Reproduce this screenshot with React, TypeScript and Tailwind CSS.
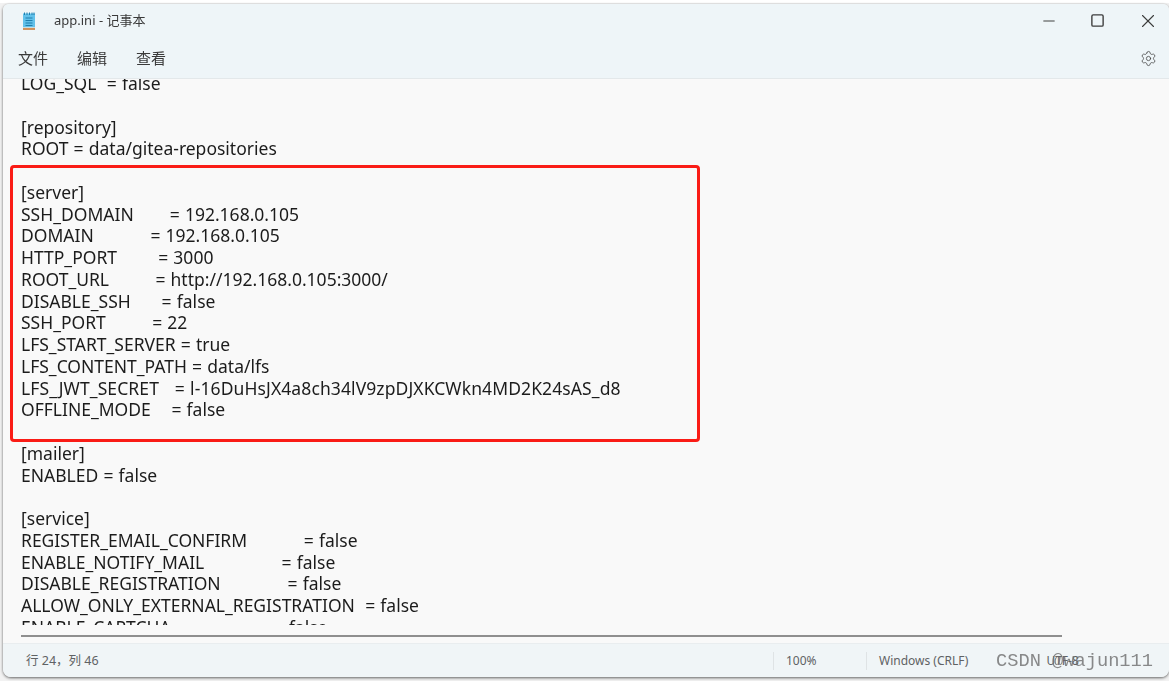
import React from "react";
import { Settings, X, Minus, Square } from "lucide-react";

const lines = [
  "LOG_SQL  = false",
  "",
  "[repository]",
  "ROOT = data/gitea-repositories",
  "",
  "[server]",
  "SSH_DOMAIN       = 192.168.0.105",
  "DOMAIN           = 192.168.0.105",
  "HTTP_PORT        = 3000",
  "ROOT_URL         = http://192.168.0.105:3000/",
  "DISABLE_SSH      = false",
  "SSH_PORT         = 22",
  "LFS_START_SERVER = true",
  "LFS_CONTENT_PATH = data/lfs",
  "LFS_JWT_SECRET   = l-16DuHsJX4a8ch34lV9zpDJXKCWkn4MD2K24sAS_d8",
  "OFFLINE_MODE    = false",
  "",
  "[mailer]",
  "ENABLED = false",
  "",
  "[service]",
  "REGISTER_EMAIL_CONFIRM           = false",
  "ENABLE_NOTIFY_MAIL               = false",
  "DISABLE_REGISTRATION             = false",
  "ALLOW_ONLY_EXTERNAL_REGISTRATION  = false",
  "ENABLE_CAPTCHA                    = false",
];

const NotepadIcon = () => (
  <svg width="14" height="18" viewBox="0 0 14 18">
    <rect x="1" y="1.5" width="12" height="14" fill="#62c1ea" />
    <rect x="1" y="15.5" width="12" height="0.8" fill="#e8e2d4" />
    <rect x="1" y="16.3" width="12" height="1.4" fill="#c46a1e" />
    <path d="M2.5 0.5v2.5M5 0.5v2.5M7.5 0.5v2.5M10 0.5v2.5M12 0.5v2.5" stroke="#1f7fae" strokeWidth="1" />
    <path d="M3.5 6h7M3.5 8.5h7M3.5 11h7M3.5 13.5h7" stroke="#1f7fae" strokeWidth="1" />
  </svg>
);

export default function App() {
  return (
    <div className="relative h-[681px] w-[1169px] overflow-hidden bg-[#f2f2f2] font-['Noto_Sans','Noto_Sans_CJK_SC',sans-serif]">
      <div className="h-[3px] bg-white" />
      <div className="ml-[3px] mt-px flex h-[673px] flex-col overflow-hidden rounded-t-md rounded-b-lg bg-[#f9f9f9] shadow-[0_1px_3px_rgba(0,0,0,0.6)] blur-[0.3px]">
        {/* Title bar */}
        <div className="h-[75px] shrink-0 border-b border-[#e3e8ea] bg-[#eef5f8]">
          <div className="flex h-[33px] items-center">
            <div className="ml-[19px] flex w-[14px]">
              <NotepadIcon />
            </div>
            <span className="ml-[18px] text-[13px] text-[#3a3a3a]">app.ini - 记事本</span>
            <div className="ml-auto flex items-center gap-[32px] pr-[10px] text-[#3c3c3c]">
              <Minus size={18} strokeWidth={1.3} />
              <Square size={15} strokeWidth={2.2} />
              <X size={22} strokeWidth={1.2} />
            </div>
          </div>
          <div className="flex h-[42px] items-center pl-[15px] pr-[12px] text-[15px] text-[#3a3a3a]">
            <span>文件</span>
            <span className="ml-[29px]">编辑</span>
            <span className="ml-[29px]">查看</span>
            <Settings size={17} strokeWidth={1.1} className="ml-auto text-[#444]" />
          </div>
        </div>

        {/* Editor */}
        <div className="flex h-[564px] shrink-0 flex-col">
          <div className="h-[546px] overflow-hidden">
            <div className="-mt-[6px] pl-[18px] text-[17.5px] leading-[21.75px] text-[#1c1c1c] [word-spacing:0.6px]">
              {lines.map((line, i) => (
                <div
                  key={i}
                  className={line.startsWith("LFS_JWT") ? "h-[21.75px] whitespace-pre tracking-[0.1px]" : "h-[21.75px] whitespace-pre"}
                >
                  {line}
                </div>
              ))}
            </div>
          </div>
          <div className="ml-[18px] mt-[10px] h-[2px] w-[1041px] bg-[#8f8f8f]" />
        </div>
        <div className="h-[34px] shrink-0 border-t border-[#e9edef] bg-[#f0f5f7] text-[12px] text-[#5f6264]">
          <div className="flex h-full items-center">
            <span className="ml-[23px] mt-px text-[12.5px]">行 24，列 46</span>
            <div className="ml-auto flex h-[18px] items-center">
              <div className="h-full w-px bg-[#dfe3e5]" />
              <span className="w-[92px] pl-[12px]">100%</span>
              <div className="h-full w-px bg-[#dfe3e5]" />
              <span className="w-[302px] pl-[12px]">
                Windows (CRLF)
                <span className="ml-[78px]">UTF-8</span>
              </span>
            </div>
          </div>
        </div>
      </div>

      {/* Red annotation */}
      <div className="absolute left-[10px] top-[165px] h-[277px] w-[690px] rounded-[4px] border-[3px] border-[#fa1c16]" />
      {/* Watermark */}
      <div className="absolute left-[996px] top-[650px] font-['Liberation_Mono',monospace] text-[18.7px] leading-[22px] text-[#6d6d6d]/80">
        CSDN @wajun111
      </div>
    </div>
  );
}
